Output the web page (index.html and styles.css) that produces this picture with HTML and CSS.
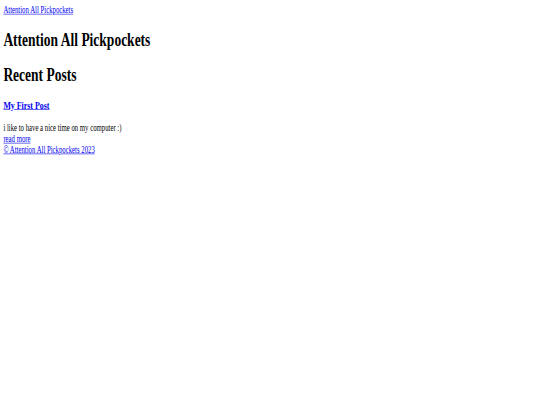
FILE: index.html
```html
<!DOCTYPE html>
<html>
<head>
<meta charset="utf-8">
<link rel="stylesheet" href="styles.css">
</head>
<body>
<div class="viewport">
<div class="page">
  <nav class="nav"><a href="#">Attention All Pickpockets</a></nav>
  <h1 class="title">Attention All Pickpockets</h1>
  <h1 class="title">Recent Posts</h1>
  <article class="post">
    <h3 class="post-title"><a href="#">My First Post</a></h3>
    <p class="post-body">i like to have a nice time on my computer :)<br><a href="#">read more</a></p>
  </article>
  <footer class="footer"><a href="#">© Attention All Pickpockets 2023</a></footer>
</div>
</div>
</body>
</html>
```
FILE: styles.css
```css
html, body {
  margin: 0;
  padding: 0;
  background: #fff;
}
.viewport {
  width: 540px;
  height: 405px;
  overflow: hidden;
}
.page {
  width: 1264px;
  padding: 8px;
  font-family: "Liberation Serif", serif;
  font-size: 16px;
  color: #000;
  transform: scale(0.421875, 0.6);
  transform-origin: 0 0;
}
a { color: #0000ee; }
.title { font-size: 32px; margin: 21.44px 0; }
.post-title { font-size: 18.72px; margin: 18.72px 0; }
.post-body { margin: 16px 0 0; }
.footer { margin: 0; }
```
